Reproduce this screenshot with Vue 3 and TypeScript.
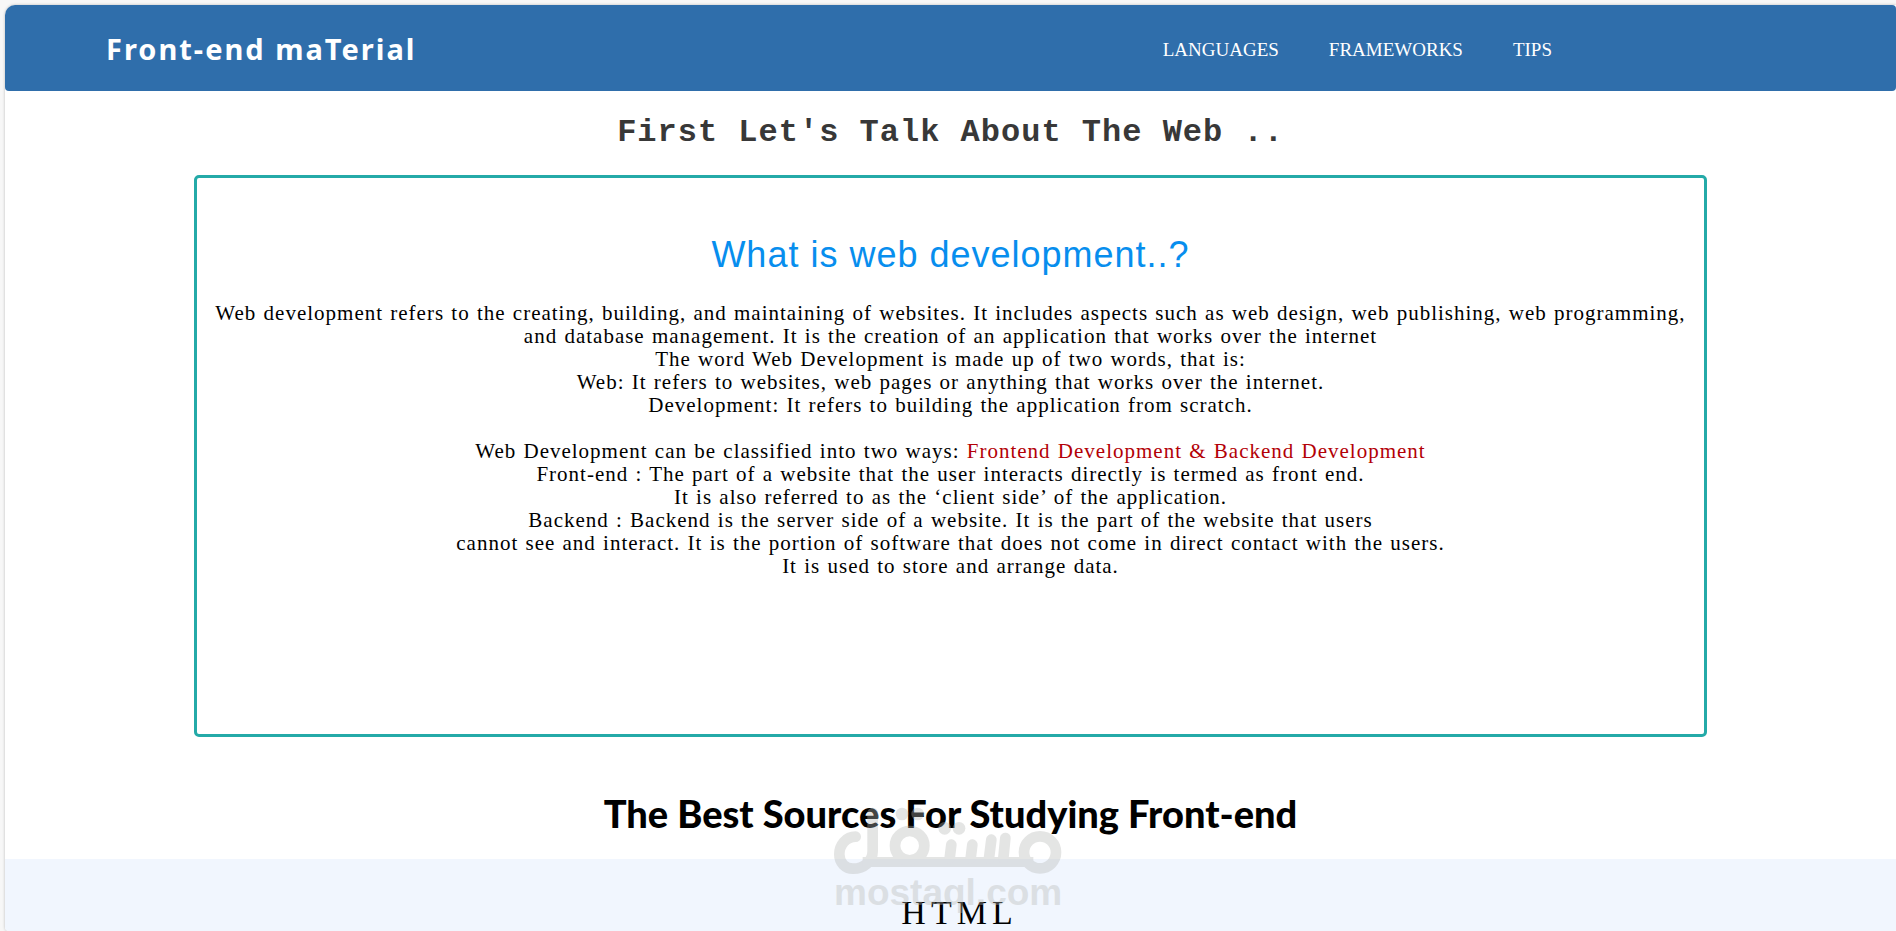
<script setup lang="ts">
interface NavItem {
  label: string
  href: string
}

const navItems: NavItem[] = [
  { label: 'LANGUAGES', href: '#languages' },
  { label: 'FRAMEWORKS', href: '#frameworks' },
  { label: 'TIPS', href: '#tips' },
]

const introLines: string[] = [
  'Web development refers to the creating, building, and maintaining of websites. It includes aspects such as web design, web publishing, web programming,',
  'and database management. It is the creation of an application that works over the internet',
  'The word Web Development is made up of two words, that is:',
  'Web: It refers to websites, web pages or anything that works over the internet.',
  'Development: It refers to building the application from scratch.',
]

const kindLines: string[] = [
  'Front-end : The part of a website that the user interacts directly is termed as front end.',
  'It is also referred to as the ‘client side’ of the application.',
  'Backend : Backend is the server side of a website. It is the part of the website that users',
  'cannot see and interact. It is the portion of software that does not come in direct contact with the users.',
  'It is used to store and arrange data.',
]
</script>

<template>
  <div class="frame">
    <div class="page">
      <header class="header">
        <a class="brand" href="#">Front-end maTerial</a>
        <nav class="nav" aria-label="Main">
          <a v-for="item in navItems" :key="item.label" :href="item.href">{{ item.label }}</a>
        </nav>
      </header>

      <main class="main">
        <h1 class="title">First Let's Talk About The Web ..</h1>

        <section class="card">
          <h2 class="card-title">What is web development..?</h2>
          <p class="text">
            <template v-for="line in introLines" :key="line">{{ line }}<br /></template>
          </p>
          <p class="text">
            Web Development can be classified into two ways:
            <span class="accent">Frontend Development &amp; Backend Development</span><br />
            <template v-for="line in kindLines" :key="line">{{ line }}<br /></template>
          </p>
        </section>

        <h2 class="sources-title">The Best Sources For Studying Front-end</h2>

        <section id="languages" class="band">
          <h3 class="band-title">HTML</h3>
        </section>
      </main>
    </div>

    <div class="watermark">
      <svg class="watermark-logo" viewBox="42 36 684 204" fill="none" aria-hidden="true">
        <g stroke="currentColor" stroke-width="32" stroke-linecap="round">
          <path d="M107 125C78 125 58 150 58 178C58 204 76 221 99 221C132 221 158 199 158 168V54" />
          <path d="M128 201H640" stroke-width="30" stroke-linecap="butt" />
          <circle cx="269" cy="152" r="44" />
          <circle cx="660" cy="172" r="48" />
          <path d="M389 190L394 149M452 190L457 149M507 190L514 134M550 190L556 129" />
        </g>
        <g fill="currentColor">
          <circle cx="246" cy="57" r="19" />
          <circle cx="293" cy="57" r="19" />
          <circle cx="374" cy="100" r="19" />
          <circle cx="417" cy="100" r="19" />
        </g>
      </svg>
      <span class="watermark-text">mostaql.com</span>
    </div>
  </div>
</template>

<style>
body {
  margin: 0;
  background: #f7f7f7;
}
</style>

<style scoped>
.frame {
  position: relative;
  box-sizing: border-box;
  display: flex;
  min-height: 100vh;
  padding: 5px 0 0 5px;
  font-family: "Liberation Serif", "Times New Roman", serif;
  color: #000;
}

.page {
  flex: 1;
  display: flex;
  flex-direction: column;
  border-radius: 10px 0 0 4px;
  overflow: hidden;
  background: #fff;
  box-shadow: 0 0 3px rgba(0, 0, 0, 0.25);
}

.header {
  flex-shrink: 0;
  display: flex;
  align-items: center;
  justify-content: space-between;
  box-sizing: border-box;
  height: 86px;
  padding: 0 344px 0 101px;
  border-radius: 4px;
  background: #2f6eab;
}

.brand {
  font-family: "Noto Sans", "Trebuchet MS", sans-serif;
  font-size: 29px;
  font-weight: 700;
  letter-spacing: 2px;
  color: #fff;
  text-decoration: none;
}

.nav {
  display: flex;
  gap: 50px;
  padding-top: 4px;
}

.nav a {
  font-size: 19px;
  color: #fff;
  text-decoration: none;
}

.main {
  flex: 1;
  display: flex;
  flex-direction: column;
  text-align: center;
}

.title {
  margin: 24px 0;
  font-family: "Liberation Mono", "Courier New", monospace;
  font-size: 32px;
  line-height: 36px;
  letter-spacing: 1px;
  color: #383838;
}

.card {
  box-sizing: border-box;
  width: 80%;
  min-height: 562px;
  margin: 0 auto;
  padding: 56px 16px 0;
  border: 3px solid #24aaa8;
  border-radius: 5px;
}

.card-title {
  margin: 0 0 26px;
  font-family: "Liberation Sans", Arial, sans-serif;
  font-size: 36px;
  font-weight: 400;
  line-height: 42px;
  letter-spacing: 1px;
  color: #078eee;
}

.text {
  margin: 0 0 23px;
  font-size: 21px;
  line-height: 23px;
  letter-spacing: 1px;
  word-spacing: 1px;
}

.accent {
  color: #b30006;
}

.sources-title {
  margin: 54px 0 24px;
  font-family: Lato, "Gill Sans", sans-serif;
  font-size: 38px;
  font-weight: 900;
  line-height: 44px;
}

.band {
  flex: 1;
  background: #f1f6fe;
}

.band-title {
  margin: 36px 0 0;
  padding-left: 18px;
  font-size: 34px;
  font-weight: 400;
  line-height: 36px;
  letter-spacing: 5px;
}

.watermark {
  position: absolute;
  left: 50%;
  top: 807px;
  width: 228px;
  margin-left: -114px;
  color: #b7b9b7;
  opacity: 0.37;
  pointer-events: none;
}

.watermark-logo {
  display: block;
  width: 228px;
  height: 68px;
}

.watermark-text {
  display: block;
  font-family: "Liberation Sans", Arial, sans-serif;
  font-size: 37px;
  font-weight: 700;
  line-height: 36px;
}
</style>
